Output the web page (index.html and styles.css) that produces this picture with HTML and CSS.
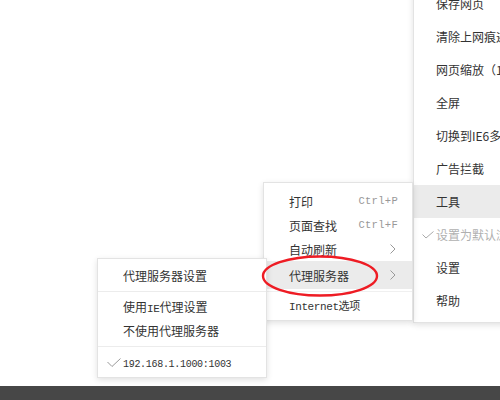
FILE: index.html
```html
<!DOCTYPE html>
<html lang="zh-CN">
<head>
    <meta charset="UTF-8">
    <title>浏览器菜单</title>
    <link rel="stylesheet" href="styles.css">
</head>
<body>
    <div class="screen">
        <!-- main browser menu, cut off by the window edge -->
        <div class="menu menu-main">
            <div class="item">保存网页</div>
            <div class="item">清除上网痕迹</div>
            <div class="item">网页缩放（100%）</div>
            <div class="item">全屏</div>
            <div class="item">切换到IE6多窗口模式</div>
            <div class="item">广告拦截</div>
            <div class="item active">工具</div>
            <div class="item disabled">
                <svg class="check" width="12" height="8" viewBox="0 0 12 8"><polyline points="0.5,3.5 4,7 11.5,0.5" fill="none" stroke="#aaa" stroke-width="1"/></svg>
                设置为默认浏览器
            </div>
            <div class="item">设置</div>
            <div class="item">帮助</div>
        </div>

        <!-- tools submenu -->
        <div class="menu menu-tools">
            <div class="row"><span>打印</span><span class="key">Ctrl+P</span></div>
            <div class="row"><span>页面查找</span><span class="key">Ctrl+F</span></div>
            <div class="row"><span>自动刷新</span><svg class="arrow" width="6" height="10" viewBox="0 0 6 10"><polyline points="0.5,0.5 5,5 0.5,9.5" fill="none" stroke="#999" stroke-width="1"/></svg></div>
            <div class="row hover"><span>代理服务器</span><svg class="arrow" width="6" height="10" viewBox="0 0 6 10"><polyline points="0.5,0.5 5,5 0.5,9.5" fill="none" stroke="#999" stroke-width="1"/></svg></div>
            <div class="sep"></div>
            <div class="row"><span class="mono">Internet选项</span></div>
        </div>

        <!-- proxy submenu -->
        <div class="menu menu-proxy">
            <div class="row">代理服务器设置</div>
            <div class="sep"></div>
            <div class="row">使用<span class="mono">IE</span>代理设置</div>
            <div class="row">不使用代理服务器</div>
            <div class="sep"></div>
            <div class="row">
                <svg class="check" width="14" height="9" viewBox="0 0 14 9"><polyline points="0.5,4 5,8.5 13.5,0.5" fill="none" stroke="#999" stroke-width="1"/></svg>
                <span class="mono ip">192.168.1.1000:1003</span>
            </div>
        </div>

        <!-- red annotation circle -->
        <svg class="mark" width="124" height="48" viewBox="0 0 124 48">
            <ellipse cx="62" cy="24" rx="57" ry="19.5" fill="none" stroke="#ee1c24" stroke-width="2.4"/>
        </svg>

        <div class="taskbar"></div>
    </div>
</body>
</html>
```

FILE: styles.css
```css
body {
    margin: 0;
    background: #fff;
    font-family: "Noto Sans CJK SC", "Noto Sans", sans-serif;
    font-size: 12px;
    color: #333;
}
.screen {
    position: relative;
    width: 500px;
    height: 400px;
    overflow: hidden;
}
.menu {
    position: absolute;
    background: #fff;
    border: 1px solid #e3e3e3;
    box-shadow: 0 2px 6px rgba(0, 0, 0, 0.12);
    box-sizing: border-box;
}
.mono {
    font-family: "Liberation Mono", "Noto Sans CJK SC", monospace;
    font-size: 11px;
    letter-spacing: -0.4px;
}

/* main menu */
.menu-main {
    left: 413px;
    top: -14px;
    width: 130px;
    padding-bottom: 5px;
}
.menu-main .item {
    position: relative;
    height: 33px;
    line-height: 33px;
    padding-left: 22px;
    white-space: nowrap;
}
.menu-main .active {
    background: #ebebeb;
}
.menu-main .disabled {
    color: #b0b0b0;
}
.menu-main .check {
    position: absolute;
    left: 8px;
    top: 13px;
}

/* tools submenu */
.menu-tools {
    left: 263px;
    top: 182px;
    width: 150px;
    padding: 6px 0 3px;
}
.menu-tools .row {
    display: flex;
    align-items: center;
    justify-content: space-between;
    height: 24px;
    padding: 0 16px 0 25px;
}
.menu-tools .hover {
    height: 28px;
    background: #ebebeb;
}
.menu-tools .key {
    font-family: "Liberation Mono", monospace;
    font-size: 10.5px;
    letter-spacing: 0.3px;
    color: #999;
    margin-right: -2px;
}
.menu-tools .sep {
    height: 1px;
    margin: 2px 0 1px;
    background: #f0f0f0;
}

/* proxy submenu */
.menu-proxy {
    left: 97px;
    top: 258px;
    width: 170px;
    padding: 5px 0 3px;
}
.menu-proxy .row {
    position: relative;
    height: 24px;
    line-height: 24px;
    padding-left: 25px;
}
.menu-proxy .ip {
    font-size: 10px;
    letter-spacing: -0.3px;
}
.menu-proxy .sep {
    height: 1px;
    margin: 3px 0;
    background: #ececec;
}
.menu-proxy .check {
    position: absolute;
    left: 9px;
    top: 8px;
}

.mark {
    position: absolute;
    left: 258px;
    top: 252px;
}
.taskbar {
    position: absolute;
    left: 0;
    bottom: 0;
    width: 100%;
    height: 14px;
    background: #474747;
}
```
